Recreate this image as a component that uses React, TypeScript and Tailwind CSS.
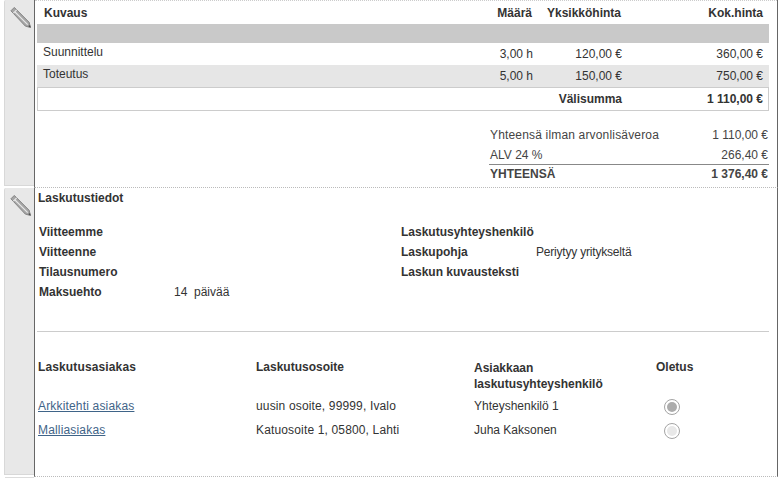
const FONT = "font-['Liberation_Sans',Arial,sans-serif]";

// ── Edit tab on the left of every section ─────────────────────────
function EditTab() {
  return (
    <div className="w-[30px] ml-[4px] mb-[2px] shrink-0 bg-[#e8e8e8] border-l border-b border-[#d8d8d8] rounded-tl-[2px] pt-[6px] pl-[4px]">
      <svg width="23" height="22" viewBox="0 0 24 23">
        <path d="M2 5 L5.5 1.5 L21 17 L22.5 22.5 L17 21 Z" fill="#a6a6a6" stroke="#808080" strokeWidth="1" strokeLinejoin="round" />
        <path d="M4.5 7.5 L8 4 M6 6 L19.5 19.5" stroke="#e8e8e8" strokeWidth="1.2" fill="none" />
        <path d="M20 21 L22.5 22.5 L22 20 Z" fill="#444" />
      </svg>
    </div>
  );
}

function Section({ height, children }: { height: string; children: React.ReactNode }) {
  return (
    <div className={`flex ${height}`}>
      <EditTab />
      <div className="flex-1 border-l border-r border-l-[#666] border-r-[#666] border-b border-b-[#bbb] [border-bottom-style:dotted] min-w-0">
        {children}
      </div>
    </div>
  );
}

const ROWS = [
  { name: 'Suunnittelu', qty: '3,00 h', unit: '120,00 €', total: '360,00 €', bg: 'bg-white h-[22px]' },
  { name: 'Toteutus', qty: '5,00 h', unit: '150,00 €', total: '750,00 €', bg: 'bg-[#e6e6e6] h-[23px] border-b border-[#ccc]' },
];

const CUSTOMERS = [
  { name: 'Arkkitehti asiakas', address: 'uusin osoite, 99999, Ivalo', contact: 'Yhteyshenkilö 1', checked: true },
  { name: 'Malliasiakas', address: 'Katuosoite 1, 05800, Lahti', contact: 'Juha Kaksonen', checked: false },
];

function Radio({ checked }: { checked: boolean }) {
  return (
    <div className="w-[16px] h-[16px] mt-[2px] rounded-full border border-[#a4a4a4] bg-white flex items-center justify-center">
      <div className={`w-[10px] h-[10px] rounded-full ${checked ? 'bg-[#acacac]' : 'bg-[#e8e8e8]'}`} />
    </div>
  );
}

export default function App() {
  return (
    <div className={`${FONT} w-[778px] h-[478px] overflow-hidden bg-white text-[12px] leading-[14px] text-[#333]`}>
      {/* ── Rows and totals ─────────────────────────────────────── */}
      <Section height="h-[188px]">
        <div className="pl-[2px] pr-[8px] border-t border-dotted border-[#ccc]">
          <div className="h-[23px] flex items-center font-bold">
            <span className="pl-[7px] w-[438px]">Kuvaus</span>
            <span className="w-[57px] text-right">Määrä</span>
            <span className="w-[89px] text-right">Yksikköhinta</span>
            <span className="w-[142px] text-right">Kok.hinta</span>
          </div>
          <div className="h-[19px] bg-[#c9c9c9]" />
          {ROWS.map(r => (
            <div key={r.name} className={`flex ${r.bg}`}>
              <span className="pl-[6px] w-[438px] pt-[2px]">{r.name}</span>
              <span className="w-[58px] text-right pt-[4px]">{r.qty}</span>
              <span className="w-[89px] text-right pt-[4px]">{r.unit}</span>
              <span className="w-[141px] text-right pt-[4px]">{r.total}</span>
            </div>
          ))}
          <div className="h-[23px] flex items-center font-bold border-l border-r border-b border-[#ccc]">
            <span className="w-[584px] text-right">Välisumma</span>
            <span className="w-[141px] text-right">1 110,00 €</span>
          </div>
          <div className="ml-[452px] mt-[14px] text-[#444]">
            <div className="h-[20px] flex justify-between items-center pl-[1px] pr-[1px]">
              <span className="tracking-[0.17px]">Yhteensä ilman arvonlisäveroa</span>
              <span>1 110,00 €</span>
            </div>
            <div className="h-[20px] flex justify-between items-center pl-[1px] pr-[1px] border-b border-[#888]">
              <span>ALV 24 %</span>
              <span>266,40 €</span>
            </div>
            <div className="h-[18px] flex justify-between items-center pl-[1px] pr-[1px] font-bold">
              <span>YHTEENSÄ</span>
              <span>1 376,40 €</span>
            </div>
          </div>
        </div>
      </Section>

      {/* ── Billing details ─────────────────────────────────────── */}
      <Section height="h-[289px]">
        <div className="pl-[3px] pr-[8px]">
          <div className="font-bold pt-[3px] h-[33px]">Laskutustiedot</div>
          <div className="grid grid-cols-[135px_227px_135px_1fr] auto-rows-[20px] items-center pl-[1px] mt-[1px]">
            <b>Viitteemme</b><span /><b>Laskutusyhteyshenkilö</b><span />
            <b>Viitteenne</b><span /><b>Laskupohja</b><span className="tracking-[-0.2px]">Periytyy yritykseltä</span>
            <b>Tilausnumero</b><span /><b>Laskun kuvausteksti</b><span />
            <b>Maksuehto</b><span>14&nbsp; päivää</span><span /><span />
          </div>
          <div className="h-px bg-[#ccc] mt-[29px] -ml-[1px]" />
          <div className="grid grid-cols-[218px_218px_182px_1fr] mt-[28px] font-bold h-[34px]">
            <span className="tracking-[0.13px]">Laskutusasiakas</span>
            <span>Laskutusosoite</span>
            <span className="leading-[16px]">Asiakkaan<br />laskutusyhteyshenkilö</span>
            <span>Oletus</span>
          </div>
          {CUSTOMERS.map(c => (
            <div key={c.name} className="grid grid-cols-[218px_218px_190px_1fr] h-[24px] items-center">
              <a className="text-[#3f6488] underline tracking-[0.17px]">{c.name}</a>
              <span className="tracking-[0.15px]">{c.address}</span>
              <span>{c.contact}</span>
              <Radio checked={c.checked} />
            </div>
          ))}
        </div>
      </Section>

      {/* Top edge of the next tab */}
      <div className="h-px w-[29px] ml-[5px] bg-[#dcdcdc]" />
    </div>
  );
}
